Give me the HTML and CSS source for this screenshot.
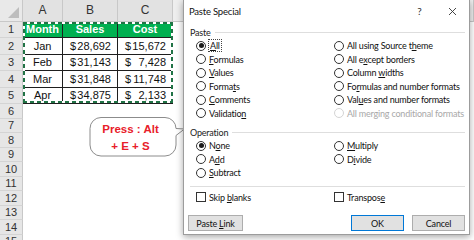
FILE: index.html
```html
<!DOCTYPE html>
<html lang="en">
<head>
  <meta charset="UTF-8">
  <title>Paste Special</title>
  <link rel="stylesheet" href="styles.css">
</head>
<body>
  <div class="sheet">
    <div class="corner"></div>
    <div class="col-heads">
      <div class="col-head w-a">A</div>
      <div class="col-head w-b">B</div>
      <div class="col-head w-c">C</div>
      <div class="col-head rest"></div>
    </div>
    <div class="row-heads">
      <div class="row-head tall">1</div>
      <div class="row-head tall">2</div>
      <div class="row-head tall">3</div>
      <div class="row-head tall">4</div>
      <div class="row-head tall">5</div>
      <div class="row-head">6</div>
      <div class="row-head">7</div>
      <div class="row-head">8</div>
      <div class="row-head">9</div>
      <div class="row-head">10</div>
      <div class="row-head">11</div>
      <div class="row-head">12</div>
      <div class="row-head">13</div>
      <div class="row-head">14</div>
      <div class="row-head">15</div>
    </div>
    <div class="cells">
      <div class="data">
        <div class="cell hdr">Month</div>
        <div class="cell hdr">Sales</div>
        <div class="cell hdr">Cost</div>

        <div class="cell txt">Jan</div>
        <div class="cell money"><span>$</span><span>28,692</span></div>
        <div class="cell money"><span>$</span><span>15,672</span></div>

        <div class="cell txt">Feb</div>
        <div class="cell money"><span>$</span><span>31,143</span></div>
        <div class="cell money"><span>$</span><span>7,428</span></div>

        <div class="cell txt">Mar</div>
        <div class="cell money"><span>$</span><span>31,848</span></div>
        <div class="cell money"><span>$</span><span>11,748</span></div>

        <div class="cell txt">Apr</div>
        <div class="cell money"><span>$</span><span>34,875</span></div>
        <div class="cell money"><span>$</span><span>2,133</span></div>
      </div>
    </div>
  </div>

  <div class="callout">
    <svg class="callout-shape" width="100" height="46" viewBox="0 0 100 46">
      <path d="M13 3.5 H77 A11 11 0 0 1 88 14.5 L96.5 15 L88 21.5 V31 A11 11 0 0 1 77 42 H13 A11 11 0 0 1 2 31 V14.5 A11 11 0 0 1 13 3.5 Z" fill="#fff" stroke="#8c8c8c" stroke-width="1"/>
    </svg>
    <div class="callout-text">Press : Alt</div>
    <div class="callout-text">+ E + S</div>
  </div>

  <div class="dialog">
    <div class="titlebar">
      <span class="title">Paste Special</span>
      <span class="tb-btn">?</span>
      <span class="tb-btn">
        <svg width="9" height="9" viewBox="0 0 9 9"><path d="M1 1 L8 8 M8 1 L1 8" stroke="#333" stroke-width="0.9"/></svg>
      </span>
    </div>
    <div class="dlg-body">
      <div class="group-head">Paste</div>
      <div class="opts opts-paste">
        <div class="opt"><span class="radio on"></span><span class="focus"><u>A</u>ll</span></div>
        <div class="opt"><span class="radio"></span><span><u>F</u>ormulas</span></div>
        <div class="opt"><span class="radio"></span><span><u>V</u>alues</span></div>
        <div class="opt"><span class="radio"></span><span>Forma<u>t</u>s</span></div>
        <div class="opt"><span class="radio"></span><span><u>C</u>omments</span></div>
        <div class="opt"><span class="radio"></span><span>Validatio<u>n</u></span></div>
        <div class="opt"><span class="radio"></span><span>All using Source t<u>h</u>eme</span></div>
        <div class="opt"><span class="radio"></span><span>All e<u>x</u>cept borders</span></div>
        <div class="opt"><span class="radio"></span><span>Column <u>w</u>idths</span></div>
        <div class="opt"><span class="radio"></span><span>Fo<u>r</u>mulas and number formats</span></div>
        <div class="opt"><span class="radio"></span><span>Val<u>u</u>es and number formats</span></div>
        <div class="opt off"><span class="radio"></span><span>All merging conditional formats</span></div>
      </div>
      <div class="group-head op-head">Operation</div>
      <div class="opts opts-op">
        <div class="opt"><span class="radio on"></span><span>N<u>o</u>ne</span></div>
        <div class="opt"><span class="radio"></span><span>A<u>d</u>d</span></div>
        <div class="opt"><span class="radio"></span><span><u>S</u>ubtract</span></div>
        <div class="opt"><span class="radio"></span><span><u>M</u>ultiply</span></div>
        <div class="opt"><span class="radio"></span><span>D<u>i</u>vide</span></div>
      </div>
      <div class="sep"></div>
      <div class="opts opts-check">
        <div class="opt"><span class="check"></span><span>Skip <u>b</u>lanks</span></div>
        <div class="opt"><span class="check"></span><span>Transpos<u>e</u></span></div>
      </div>
      <div class="buttons">
        <div class="btn wide"><span>Paste <u>L</u>ink</span></div>
        <div class="spacer"></div>
        <div class="btn default"><span>OK</span></div>
        <div class="btn"><span>Cancel</span></div>
      </div>
    </div>
  </div>
</body>
</html>
```

FILE: styles.css
```css
body {
  margin: 0;
  width: 474px;
  height: 240px;
  overflow: hidden;
  position: relative;
  background: #fff;
  font-family: 'Liberation Sans', Arial, sans-serif;
}
.sheet {
  display: grid;
  grid-template-columns: 23px 1fr;
  grid-template-rows: 21.5px 1fr;
  height: 240px;
}
.corner {
  background: #e9e9e9;
  border-right: 1px solid #c8c8c8;
  border-bottom: 1px solid #c8c8c8;
  box-sizing: border-box;
  position: relative;
}
.corner::after {
  content: '';
  position: absolute;
  right: 3px;
  bottom: 3px;
  border-left: 11px solid transparent;
  border-bottom: 11px solid #bdbdbd;
}
.col-heads {
  display: flex;
}
.col-head {
  background: #e2e2e2;
  border-right: 1px solid #c8c8c8;
  border-bottom: 1px solid #c8c8c8;
  box-sizing: border-box;
  color: #333;
  font-size: 12px;
  display: flex;
  align-items: center;
  justify-content: center;
}
.w-a { width: 40px; }
.w-b { width: 55px; }
.w-c { width: 55px; }
.rest { flex: 1; background: #eeeeee; }
.row-heads {
  display: flex;
  flex-direction: column;
}
.row-head {
  height: 14.5px;
  flex: none;
  background: #e6e6e6;
  border-right: 1px solid #c8c8c8;
  border-bottom: 1px solid #d4d4d4;
  box-sizing: border-box;
  color: #333;
  font-size: 11px;
  display: flex;
  align-items: center;
  justify-content: center;
}
.row-head.tall {
  height: 16.5px;
}
.cells {
  background: #fff;
}
.data {
  display: grid;
  grid-template-columns: 40px 55px 55px;
  grid-template-rows: repeat(5, 16.5px);
  width: 150px;
  position: relative;
}
.data::after {
  content: '';
  position: absolute;
  inset: 0 0 1px 0;
  background:
    repeating-linear-gradient(90deg, #217346 0 4px, #fff 4px 7px) top / 100% 2px no-repeat,
    repeating-linear-gradient(90deg, #217346 0 4px, #fff 4px 7px) bottom / 100% 2px no-repeat,
    repeating-linear-gradient(180deg, #217346 0 4px, #fff 4px 7px) left / 2px 100% no-repeat,
    repeating-linear-gradient(180deg, #217346 0 4px, #fff 4px 7px) right / 2px 100% no-repeat;
}
.cell {
  border-right: 1px solid #1e1e1e;
  border-bottom: 1px solid #1e1e1e;
  box-sizing: border-box;
  font-size: 11px;
  color: #111;
  display: flex;
  align-items: center;
}
.hdr {
  background: #00b050;
  color: #fff;
  font-weight: bold;
  justify-content: center;
}
.txt {
  justify-content: center;
}
.money {
  justify-content: space-between;
  padding: 0 6px 0 7px;
}

.callout {
  position: absolute;
  left: 90px;
  top: 117px;
  width: 86px;
  height: 38px;
  padding: 3.5px 5px 0 0;
  box-sizing: border-box;
}
.callout-shape {
  position: absolute;
  left: -2px;
  top: -3.5px;
}
.callout-text {
  position: relative;
  text-align: center;
  line-height: 17px;
  font-size: 11.5px;
  font-weight: bold;
  color: #e8202a;
}

.dialog {
  position: absolute;
  left: 183px;
  top: 0;
  width: 287px;
  height: 235px;
  box-sizing: border-box;
  background: #fff;
  border: 1px solid #9c9c9c;
  border-top: none;
  box-shadow: 0 2px 7px rgba(0, 0, 0, 0.35);
  font-family: Lato, 'Liberation Sans', sans-serif;
  font-size: 9px;
  letter-spacing: -0.2px;
  color: #111;
  display: flex;
  flex-direction: column;
}
.titlebar {
  height: 22px;
  flex: none;
  display: flex;
  align-items: center;
  padding-left: 5px;
}
.title {
  flex: 1;
  font-size: 9.5px;
}
.tb-btn {
  width: 33px;
  text-align: center;
  font-size: 10px;
  color: #333;
  display: flex;
  justify-content: center;
}
.dlg-body {
  flex: 1;
  padding: 4px 4px 4px 6px;
  display: flex;
  flex-direction: column;
}
.group-head {
  height: 12px;
  display: flex;
  align-items: center;
  gap: 4px;
  color: #222;
}
.group-head::after {
  content: '';
  flex: 1;
  height: 1px;
  background: #dedede;
}
.op-head {
  margin-top: 6px;
}
.opts {
  display: grid;
  grid-template-columns: 138px 1fr;
  grid-auto-flow: column;
  padding-left: 6px;
  margin-top: 1px;
}
.opts-paste { grid-template-rows: repeat(6, 13.5px); }
.opts-op { grid-template-rows: repeat(3, 13.5px); }
.opts-check {
  grid-template-rows: 13.5px;
  margin-top: 4px;
}
.opt {
  display: flex;
  align-items: center;
  gap: 3px;
  white-space: nowrap;
}
.radio,
.check {
  width: 10px;
  height: 10px;
  flex: none;
  box-sizing: border-box;
  border: 1px solid #333;
  background: #fff;
  position: relative;
}
.radio {
  border-radius: 50%;
}
.radio.on::after {
  content: '';
  position: absolute;
  inset: 1.5px;
  border-radius: 50%;
  background: #1a1a1a;
}
.opt.off {
  color: #a8a8a8;
}
.opt.off .radio {
  border-color: #d4d4d4;
}
.focus {
  outline: 1px dotted #444;
  padding: 0 1px;
}
.sep {
  height: 1px;
  background: #dedede;
  margin-top: 6px;
}
.buttons {
  display: flex;
  gap: 8px;
  margin: 11px 0 0 -2px;
}
.spacer {
  flex: 1;
}
.btn {
  width: 53px;
  height: 16px;
  box-sizing: border-box;
  border: 1px solid #adadad;
  background: #e1e1e1;
  display: flex;
  align-items: center;
  justify-content: center;
}
.btn.wide {
  width: 55px;
}
.btn.default {
  border-color: #0078d7;
}
```
